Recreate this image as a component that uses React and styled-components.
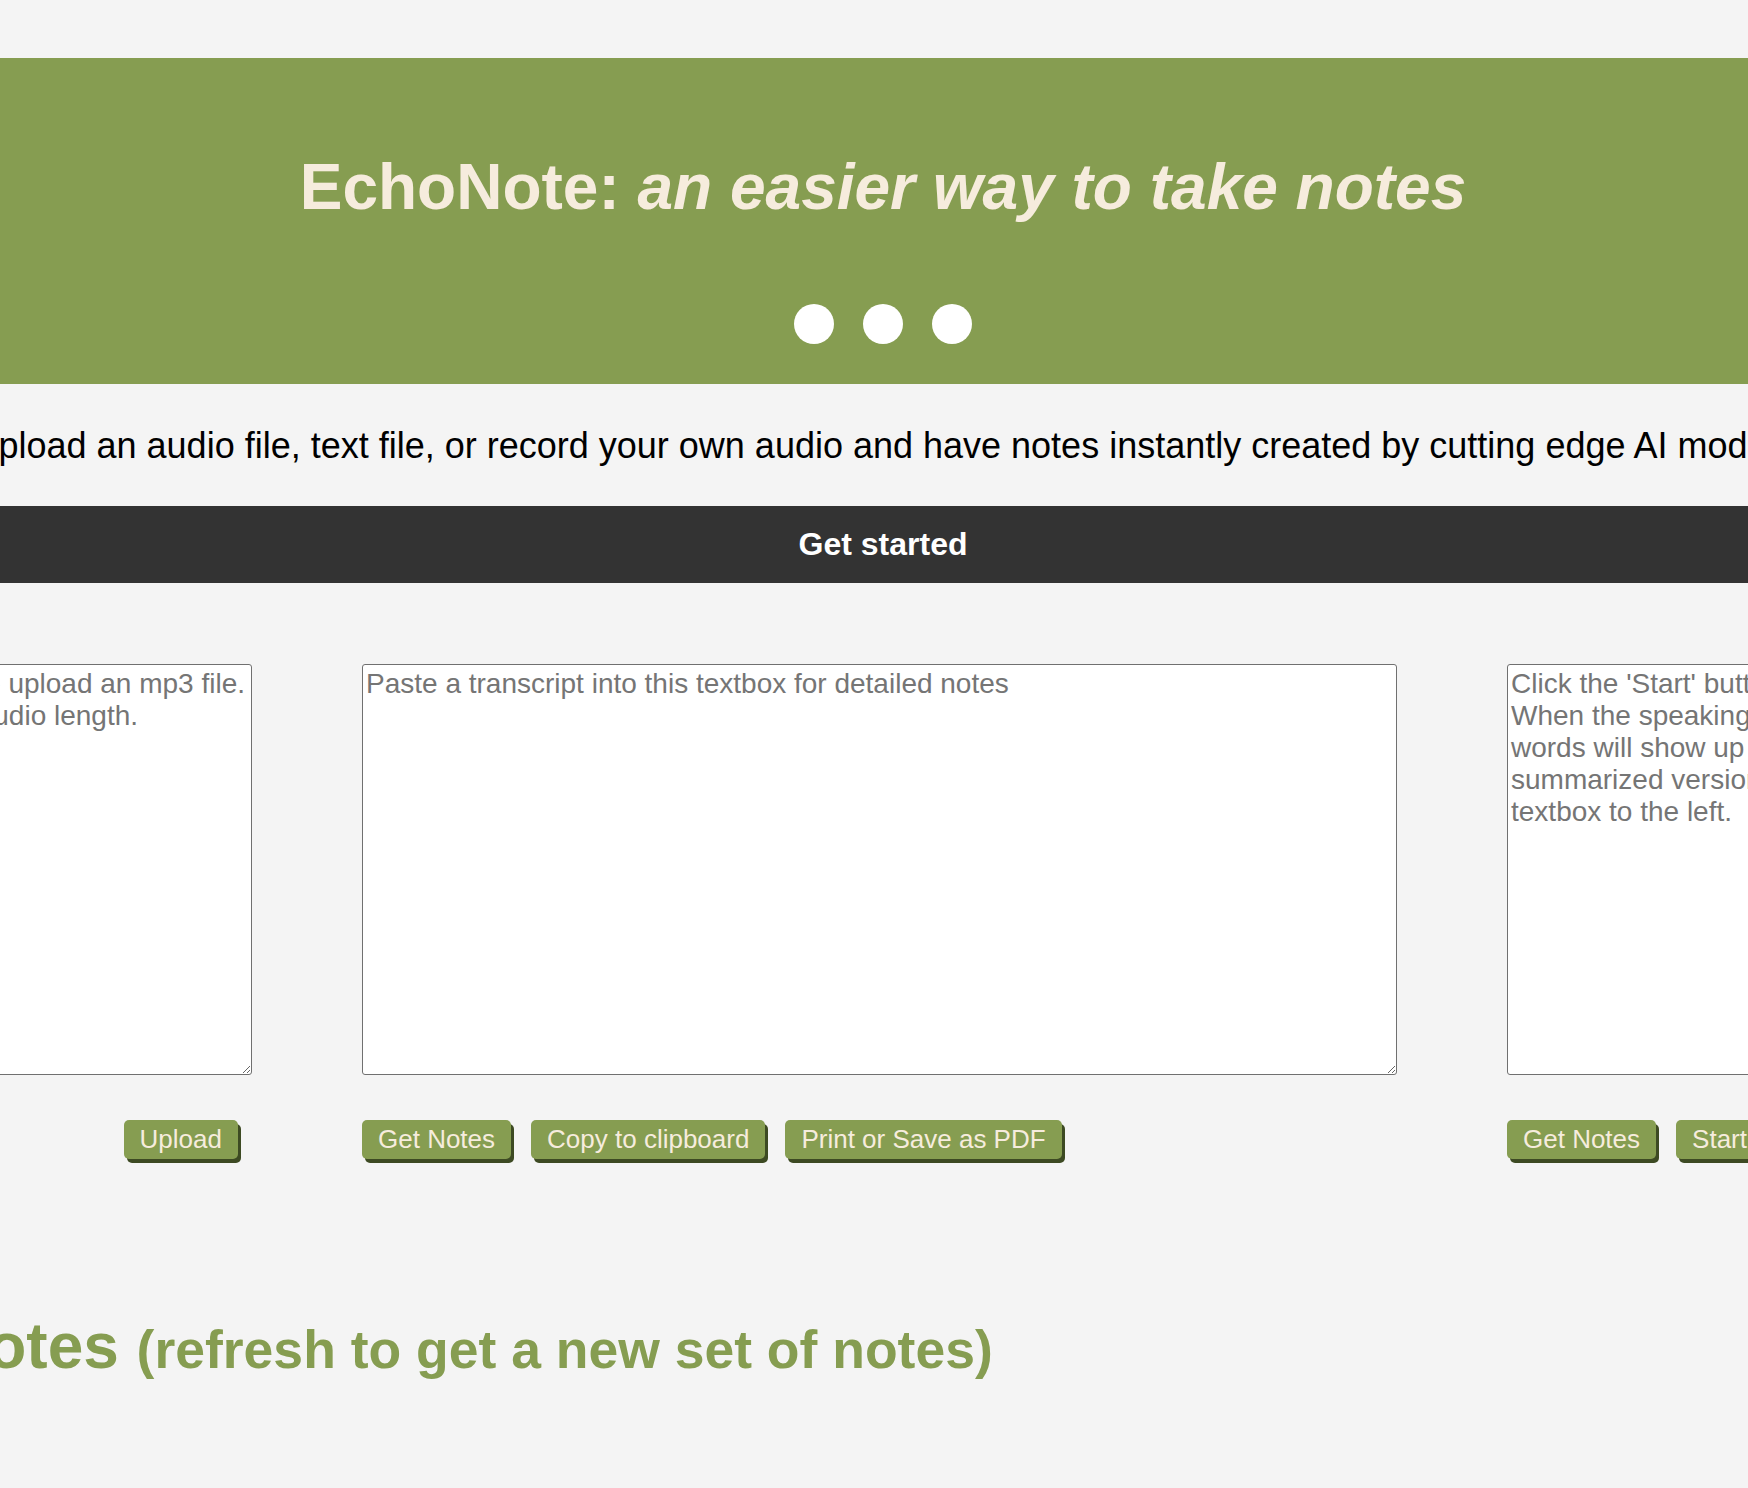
import React from "react"
import styled, { createGlobalStyle } from "styled-components"

const GlobalStyle = createGlobalStyle`
html, body {
  margin: 0;
  padding: 0;
  overflow: hidden;
  background-color: #f4f4f4;
  font-family: "Liberation Sans", Arial, Helvetica, sans-serif;
}
`

const green = "#869d51"
const cream = "#f6ecdd"

const Page = styled.div`
width: 1900px;
margin-left: -67px;
padding-top: 58px;
`

const Header = styled.header`
display: flex;
flex-direction: column;
align-items: center;
background-color: ${green};
padding: 92px 0 40px;
`

const Title = styled.h1`
margin: 0;
font-size: 64px;
line-height: 74px;
font-weight: bold;
color: ${cream};
white-space: nowrap;
`

const Dots = styled.div`
display: flex;
gap: 29px;
margin-top: 80px;
`

const Dot = styled.span`
width: 40px;
height: 40px;
border-radius: 50%;
background-color: #fff;
`

const Intro = styled.p`
display: flex;
justify-content: center;
margin: 41px 0 0;
padding-left: 10px;
font-size: 36px;
line-height: 42px;
color: #000;
white-space: nowrap;
`

const StartBar = styled.div`
display: flex;
align-items: center;
justify-content: center;
height: 77px;
margin-top: 39px;
background-color: #333;
color: #fff;
font-size: 32px;
font-weight: bold;
`

const Columns = styled.div`
display: flex;
justify-content: center;
gap: 110px;
margin-top: 81px;
`

const Column = styled.div`
display: flex;
flex-direction: column;
flex-shrink: 0;
width: ${(p) => p.$width}px;
`

const NoteBox = styled.textarea`
box-sizing: border-box;
width: 100%;
height: 411px;
margin: 0;
padding: 3px;
border: 1px solid #707070;
border-radius: 3px;
background-color: #fff;
font-family: "Liberation Sans", Arial, Helvetica, sans-serif;
font-size: 28px;
line-height: 32px;
color: #000;
&::placeholder {
  color: #757575;
}
`

const ButtonRow = styled.div`
display: flex;
gap: 20px;
margin-top: 45px;
justify-content: ${(p) => (p.$end ? "flex-end" : "flex-start")};
padding-right: ${(p) => (p.$end ? "14px" : "0")};
`

const Button = styled.button`
padding: 4px 16px;
border: none;
border-radius: 5px;
background-color: ${green};
color: ${cream};
font-family: "Liberation Sans", Arial, Helvetica, sans-serif;
font-size: 26px;
line-height: 31px;
box-shadow: 3px 4px 0 #3d4a23;
cursor: pointer;
`

const NotesHeading = styled.h2`
margin: 150px 0 0;
padding-left: 8px;
font-size: 64px;
line-height: 74px;
font-weight: bold;
color: ${green};
white-space: nowrap;
`

const Hint = styled.span`
font-size: 53.5px;
`

const uploadText =
  "Click 'Choose File' and then 'Upload' to upload an mp3 file.\nThe processing time may depend on audio length."

const transcriptText = "Paste a transcript into this textbox for detailed notes"

const recordText =
  "Click the 'Start' button to begin recording.\nWhen the speaking is done, click 'Stop'. Your\nwords will show up here, and a\nsummarized version will appear in the\ntextbox to the left."

export default function App() {
  return (
    <>
      <GlobalStyle />
      <Page>
        <Header>
          <Title>
            EchoNote: <em>an easier way to take notes</em>
          </Title>
          <Dots>
            <Dot />
            <Dot />
            <Dot />
          </Dots>
        </Header>
        <Intro>
          Upload an audio file, text file, or record your own audio and have notes instantly created by cutting edge AI models.
        </Intro>
        <StartBar>Get started</StartBar>
        <Columns>
          <Column $width={739}>
            <NoteBox placeholder={uploadText} />
            <ButtonRow $end>
              <Button>Upload</Button>
            </ButtonRow>
          </Column>
          <Column $width={1035}>
            <NoteBox placeholder={transcriptText} />
            <ButtonRow>
              <Button>Get Notes</Button>
              <Button>Copy to clipboard</Button>
              <Button>Print or Save as PDF</Button>
            </ButtonRow>
          </Column>
          <Column $width={746}>
            <NoteBox placeholder={recordText} />
            <ButtonRow>
              <Button>Get Notes</Button>
              <Button>Start</Button>
              <Button>Stop</Button>
            </ButtonRow>
          </Column>
        </Columns>
        <NotesHeading>
          Notes <Hint>(refresh to get a new set of notes)</Hint>
        </NotesHeading>
      </Page>
    </>
  )
}
